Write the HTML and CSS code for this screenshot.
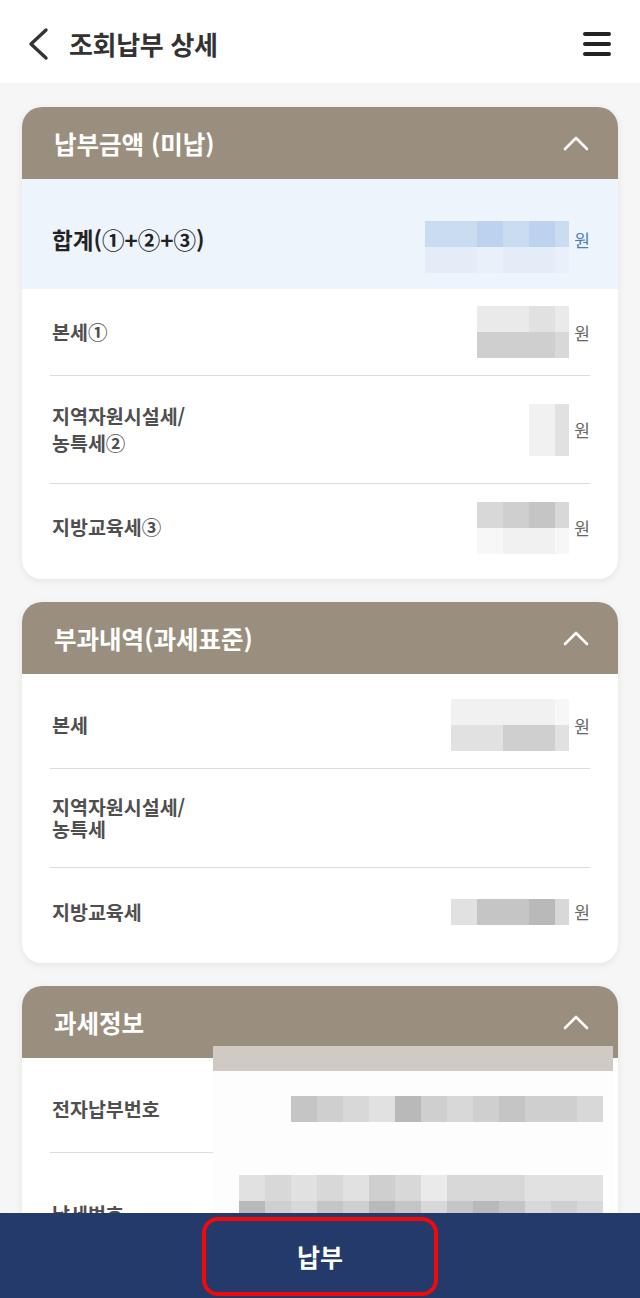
FILE: index.html
```html
<!DOCTYPE html>
<html lang="ko">
<head>
  <meta charset="UTF-8">
  <meta name="viewport" content="width=device-width, initial-scale=1.0">
  <title>조회납부 상세</title>
  <link rel="stylesheet" href="styles.css">
</head>
<body>
  <header class="topbar">
    <div class="topbar-left">
      <svg class="back" width="24" height="36" viewBox="0 0 24 36">
        <polyline points="19,4 4,18 19,32" fill="none" stroke="#333" stroke-width="3.4" stroke-linecap="round" stroke-linejoin="round"/>
      </svg>
      <h1>조회납부 상세</h1>
    </div>
    <svg class="menu" width="30" height="26" viewBox="0 0 30 26">
      <line x1="3" y1="3" x2="27" y2="3" stroke="#222" stroke-width="4" stroke-linecap="round"/>
      <line x1="3" y1="13" x2="27" y2="13" stroke="#222" stroke-width="4" stroke-linecap="round"/>
      <line x1="3" y1="23" x2="27" y2="23" stroke="#222" stroke-width="4" stroke-linecap="round"/>
    </svg>
  </header>

  <main class="content">
    <!-- 납부금액 -->
    <section class="card amount">
      <div class="card-head">
        <h2>납부금액 (미납)</h2>
        <svg class="fold" width="28" height="18" viewBox="0 0 28 18"><polyline points="3,15 14,4 25,15" fill="none" stroke="#fff" stroke-width="2.6" stroke-linecap="round" stroke-linejoin="round"/></svg>
      </div>
      <div class="card-body">
        <div class="total">
          <span class="label">합계(①+②+③)</span>
          <div class="value">
            <div class="mosaic">
              <div class="mrow"><i class="px"></i><i class="px"></i><i class="px"></i><i class="px"></i><i class="px"></i><i class="px n"></i></div>
              <div class="mrow"><i class="px b2"></i><i class="px b2"></i><i class="px b3"></i><i class="px b2"></i><i class="px b3"></i><i class="px n b2"></i></div>
              <div class="mrow"><i class="px b1"></i><i class="px b1"></i><i class="px b0"></i><i class="px b1"></i><i class="px b1"></i><i class="px n b0"></i></div>
            </div>
            <span class="won">원</span>
          </div>
        </div>
        <div class="row">
          <span class="label">본세①</span>
          <div class="value">
            <div class="mosaic">
              <div class="mrow"><i class="px g2"></i><i class="px g2"></i><i class="px g3"></i><i class="px n g2"></i></div>
              <div class="mrow"><i class="px g5"></i><i class="px g5"></i><i class="px g5"></i><i class="px n g4"></i></div>
            </div>
            <span class="won">원</span>
          </div>
        </div>
        <div class="row">
          <span class="label">지역자원시설세/<br>농특세②</span>
          <div class="value">
            <div class="mosaic">
              <div class="mrow"><i class="px g1"></i><i class="px n g3"></i></div>
              <div class="mrow"><i class="px g1"></i><i class="px n g3"></i></div>
            </div>
            <span class="won">원</span>
          </div>
        </div>
        <div class="row">
          <span class="label">지방교육세③</span>
          <div class="value">
            <div class="mosaic">
              <div class="mrow"><i class="px g4"></i><i class="px g5"></i><i class="px g6"></i><i class="px n g4"></i></div>
              <div class="mrow"><i class="px g0"></i><i class="px g1"></i><i class="px g1"></i><i class="px n g0"></i></div>
            </div>
            <span class="won">원</span>
          </div>
        </div>
      </div>
    </section>

    <!-- 부과내역 -->
    <section class="card">
      <div class="card-head">
        <h2>부과내역(과세표준)</h2>
        <svg class="fold" width="28" height="18" viewBox="0 0 28 18"><polyline points="3,15 14,4 25,15" fill="none" stroke="#fff" stroke-width="2.6" stroke-linecap="round" stroke-linejoin="round"/></svg>
      </div>
      <div class="card-body">
        <div class="row">
          <span class="label">본세</span>
          <div class="value">
            <div class="mosaic">
              <div class="mrow"><i class="px g1"></i><i class="px g1"></i><i class="px g1"></i><i class="px g1"></i><i class="px n g0"></i></div>
              <div class="mrow"><i class="px g3"></i><i class="px g3"></i><i class="px g5"></i><i class="px g5"></i><i class="px n g3"></i></div>
            </div>
            <span class="won">원</span>
          </div>
        </div>
        <div class="row">
          <span class="label">지역자원시설세/<br>농특세</span>
        </div>
        <div class="row">
          <span class="label">지방교육세</span>
          <div class="value">
            <div class="mosaic">
              <div class="mrow"><i class="px g3"></i><i class="px g6"></i><i class="px g6"></i><i class="px g7"></i><i class="px n g4"></i></div>
            </div>
            <span class="won">원</span>
          </div>
        </div>
      </div>
    </section>

    <!-- 과세정보 -->
    <section class="card info">
      <div class="card-head">
        <h2>과세정보</h2>
        <svg class="fold" width="28" height="18" viewBox="0 0 28 18"><polyline points="3,15 14,4 25,15" fill="none" stroke="#fff" stroke-width="2.6" stroke-linecap="round" stroke-linejoin="round"/></svg>
      </div>
      <div class="mask"></div>
      <div class="card-body">
        <div class="row">
          <span class="label">전자납부번호</span>
          <div class="mosaic wide">
            <div class="mrow"><i class="px g6"></i><i class="px g5"></i><i class="px g4"></i><i class="px g3"></i><i class="px g7"></i><i class="px g5"></i><i class="px g4"></i><i class="px g5"></i><i class="px g6"></i><i class="px g5"></i><i class="px g5"></i><i class="px g4"></i></div>
          </div>
        </div>
        <div class="row">
          <span class="label">납세번호</span>
          <div class="mosaic wide tall">
            <div class="mrow"><i class="px g3"></i><i class="px g4"></i><i class="px g3"></i><i class="px g4"></i><i class="px g3"></i><i class="px g5"></i><i class="px g4"></i><i class="px g2"></i><i class="px g4"></i><i class="px g4"></i><i class="px g4"></i><i class="px g3"></i><i class="px g3"></i><i class="px g3"></i></div>
            <div class="mrow"><i class="px g7"></i><i class="px g5"></i><i class="px g4"></i><i class="px g6"></i><i class="px g5"></i><i class="px g7"></i><i class="px g6"></i><i class="px g4"></i><i class="px g6"></i><i class="px g7"></i><i class="px g6"></i><i class="px g4"></i><i class="px g5"></i><i class="px g4"></i></div>
            <div class="mrow"><i class="px g4"></i><i class="px g3"></i><i class="px g4"></i><i class="px g3"></i><i class="px g4"></i><i class="px g3"></i><i class="px g4"></i><i class="px g3"></i><i class="px g4"></i><i class="px g3"></i><i class="px g4"></i><i class="px g3"></i><i class="px g4"></i><i class="px g3"></i></div>
          </div>
        </div>
        <div class="row">
          <span class="label">과세대상</span>
        </div>
      </div>
    </section>
  </main>

  <footer class="paybar">
    <button class="pay">납부</button>
  </footer>
</body>
</html>
```

FILE: styles.css
```css
* {
  box-sizing: border-box;
}
body {
  margin: 0;
  padding: 0 0 85px;
  background: #f6f6f6;
  font-family: "Noto Sans CJK KR", "Noto Sans", sans-serif;
  color: #333;
}
.topbar {
  height: 83px;
  background: #fff;
  display: flex;
  align-items: center;
  justify-content: space-between;
  padding: 4px 28px 0 27px;
}
.topbar-left {
  display: flex;
  align-items: center;
  gap: 18px;
}
.topbar h1 {
  margin: 0;
  font-size: 26px;
  font-weight: 700;
  color: #333;
  letter-spacing: -0.3px;
}
.menu {
  margin-top: 0;
}
.content {
  padding: 24px 22px 0;
  display: flex;
  flex-direction: column;
  gap: 23px;
}
.card {
  position: relative;
  background: #fff;
  border-radius: 20px;
  overflow: hidden;
  box-shadow: 0 2px 8px rgba(0, 0, 0, 0.07);
}
.card-head {
  height: 72px;
  background: #9a8f7e;
  display: flex;
  align-items: center;
  justify-content: space-between;
  padding: 0 28px 0 32px;
}
.card-head h2 {
  margin: 0;
  font-size: 24.5px;
  font-weight: 700;
  color: #fff;
}
.card-body {
  padding: 8px 0;
}
.amount .card-body {
  padding-top: 0;
}
.total {
  height: 110px;
  background: #eef4fb;
  display: flex;
  align-items: center;
  justify-content: space-between;
  padding: 0 28px 0 30px;
}
.total .label {
  font-size: 22.5px;
  color: #222;
  padding: 10px 0 0;
}
.total .won {
  color: #4b7dbd;
  margin-top: 10px;
}
.row {
  min-height: 87px;
  margin: 0 28px;
  padding-left: 2px;
  border-bottom: 1px solid #dcdcdc;
  display: flex;
  align-items: center;
  justify-content: space-between;
}
.row:last-child {
  border-bottom: none;
}
.label {
  padding: 27px 0;
  font-size: 19.5px;
  font-weight: 700;
  color: #4f4f4f;
  line-height: 22px;
}
.amount .label {
  line-height: 26.5px;
}
.value {
  display: flex;
  align-items: center;
  gap: 5px;
}
.won {
  font-size: 17px;
  color: #666;
}

/* pixelated values */
.mosaic {
  display: flex;
  flex-direction: column;
  position: relative;
  z-index: 2;
}
.mosaic.wide {
  margin-right: -13px;
}
.mosaic.tall {
  margin: 22px -13px 22px 0;
}
.mrow {
  display: flex;
}
.px {
  width: 26px;
  height: 26px;
}
.px.n {
  width: 14px;
}
.g0 { background: #f7f7f7; }
.g1 { background: #f1f1f1; }
.g2 { background: #eaeaea; }
.g3 { background: #e1e1e1; }
.g4 { background: #d8d8d8; }
.g5 { background: #cfcfcf; }
.g6 { background: #c5c5c5; }
.g7 { background: #b9b9b9; }
.b0 { background: #e9f0f9; }
.b1 { background: #e3ecf7; }
.b2 { background: #cadcf0; }
.b3 { background: #bcd2ee; }

.mask {
  position: absolute;
  left: 191px;
  top: 60px;
  width: 400px;
  bottom: 0;
  z-index: 1;
  background: #fdfdfd;
  border-top: 25px solid #cfcbc4;
}

.paybar {
  position: fixed;
  left: 0;
  right: 0;
  bottom: 0;
  height: 85px;
  background: #233a6b;
  display: flex;
  justify-content: center;
  align-items: center;
  z-index: 10;
}
.pay {
  width: 236px;
  height: 79px;
  margin-top: 1px;
  border: 4px solid #f00a0a;
  border-radius: 16px;
  background: transparent;
  color: #fff;
  font-family: "Noto Sans CJK KR", sans-serif;
  font-size: 25px;
  font-weight: 700;
}
```
